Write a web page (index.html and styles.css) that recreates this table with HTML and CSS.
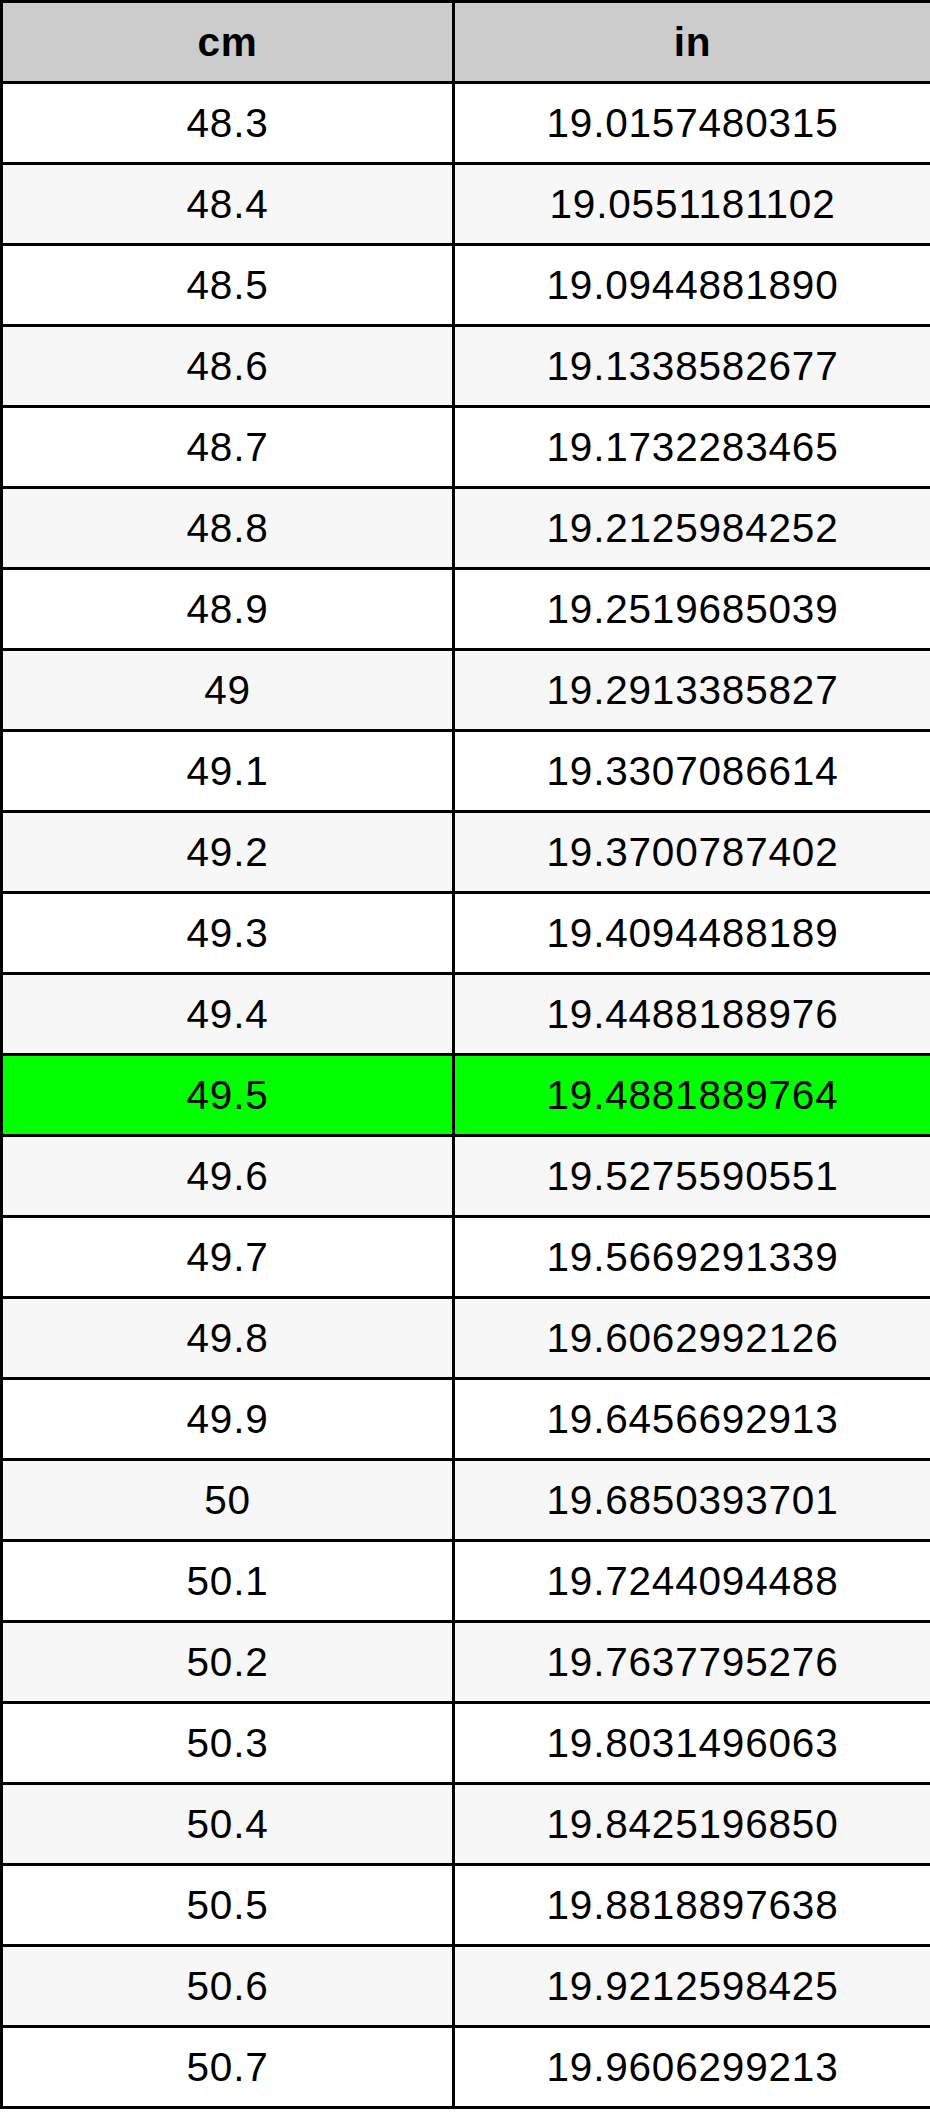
FILE: index.html
```html
<!DOCTYPE html>
<html lang="en">
<head>
<meta charset="utf-8">
<title>cm to in</title>
<link rel="stylesheet" href="styles.css">
</head>
<body>
<table class="conv">
<colgroup><col class="c1"><col class="c2"></colgroup>
<thead>
<tr><th>cm</th><th>in</th></tr>
</thead>
<tbody>
<tr><td>48.3</td><td>19.0157480315</td></tr>
<tr><td>48.4</td><td>19.0551181102</td></tr>
<tr><td>48.5</td><td>19.0944881890</td></tr>
<tr><td>48.6</td><td>19.1338582677</td></tr>
<tr><td>48.7</td><td>19.1732283465</td></tr>
<tr><td>48.8</td><td>19.2125984252</td></tr>
<tr><td>48.9</td><td>19.2519685039</td></tr>
<tr><td>49</td><td>19.2913385827</td></tr>
<tr><td>49.1</td><td>19.3307086614</td></tr>
<tr><td>49.2</td><td>19.3700787402</td></tr>
<tr><td>49.3</td><td>19.4094488189</td></tr>
<tr><td>49.4</td><td>19.4488188976</td></tr>
<tr class="hl"><td>49.5</td><td>19.4881889764</td></tr>
<tr><td>49.6</td><td>19.5275590551</td></tr>
<tr><td>49.7</td><td>19.5669291339</td></tr>
<tr><td>49.8</td><td>19.6062992126</td></tr>
<tr><td>49.9</td><td>19.6456692913</td></tr>
<tr><td>50</td><td>19.6850393701</td></tr>
<tr><td>50.1</td><td>19.7244094488</td></tr>
<tr><td>50.2</td><td>19.7637795276</td></tr>
<tr><td>50.3</td><td>19.8031496063</td></tr>
<tr><td>50.4</td><td>19.8425196850</td></tr>
<tr><td>50.5</td><td>19.8818897638</td></tr>
<tr><td>50.6</td><td>19.9212598425</td></tr>
<tr><td>50.7</td><td>19.9606299213</td></tr>
</tbody>
</table>
</body>
</html>
```

FILE: styles.css
```css
html, body {
  margin: 0;
  padding: 0;
  background: #ffffff;
}

.conv {
  width: 930px;
  border-collapse: collapse;
  table-layout: fixed;
  font-family: "Liberation Sans", Arial, Helvetica, sans-serif;
  font-size: 40.5px;
  letter-spacing: 0.8px;
  color: #000000;
}

.c1 { width: 452px; }
.c2 { width: 478px; }

.conv th,
.conv td {
  border: 3px solid #000000;
  padding: 0;
  height: 78px;
  text-align: center;
  vertical-align: middle;
  line-height: 1;
}

.conv th {
  background: #cccccc;
  font-weight: bold;
}

.conv tbody tr:nth-child(odd) td { background: #ffffff; }
.conv tbody tr:nth-child(even) td { background: #f7f7f7; }
.conv tbody tr.hl td { background: #00ff00; }
```
